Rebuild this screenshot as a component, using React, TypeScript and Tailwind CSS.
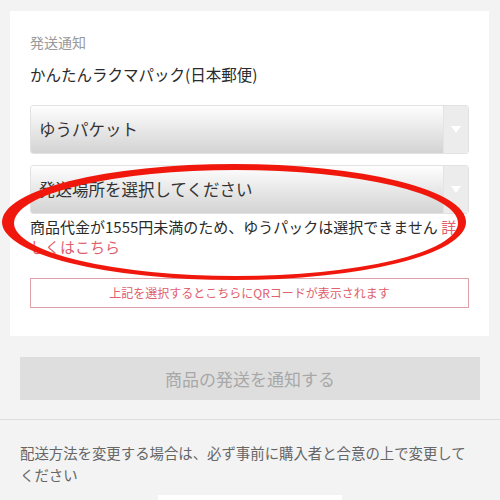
import React from 'react';

const SelectBox: React.FC<{ label: string }> = ({ label }) => (
  <div className="flex h-[49px] rounded-[3px] border border-[#e2e2e2] overflow-hidden">
    <div className="flex-1 flex items-center pl-2 text-[16.5px] text-[#333] bg-gradient-to-b from-[#fefefe] to-[#d3d3d3]">
      {label}
    </div>
    <div className="w-[25px] flex items-center justify-center bg-[#ececec] border-l border-[#e4e4e4]">
      <div className="w-0 h-0 border-l-[5px] border-r-[5px] border-t-[7px] border-l-transparent border-r-transparent border-t-white" />
    </div>
  </div>
);

export default function App() {
  return (
    <div className="relative w-[500px] h-[500px] overflow-hidden bg-[#f3f3f3] font-['Noto_Sans_CJK_JP',sans-serif]">
      <div className="pt-[11px] pl-[10px] pr-[11px]">
        <div className="bg-white px-5 pt-[21px] pb-[28px]">
          <div className="text-[14px] leading-[20px] text-[#9a9a9a]">発送通知</div>
          <div className="mt-[10px] text-[15.5px] leading-[24px] text-[#2a2a2a]">かんたんラクマパック(日本郵便)</div>
          <div className="mt-[19px]">
            <SelectBox label="ゆうパケット" />
          </div>
          <div className="mt-[11px]">
            <SelectBox label="発送場所を選択してください" />
          </div>
          <p className="mt-[3px] text-[15px] leading-[20px] text-[#2a2a2a] pr-2">
            商品代金が1555円未満のため、ゆうパックは選択できません <span className="text-[#e0606e]">詳しくはこちら</span>
          </p>
          <div className="mt-[21px] h-[30px] border border-[#e0a0a8] flex items-center justify-center text-[12px] text-[#e0606e]">
            上記を選択するとこちらにQRコードが表示されます
          </div>
        </div>
      </div>

      <div className="mx-5 mt-[21px] h-[43px] bg-[#dedede] flex items-center justify-center text-[17px] text-[#a8a8a8]">
        商品の発送を通知する
      </div>

      <div className="mt-[19px] border-t border-[#dddddd]" />

      <p className="pl-5 pr-[30px] mt-[22px] text-[14.4px] leading-[22px] text-[#666]">
        配送方法を変更する場合は、必ず事前に購入者と合意の上で変更してください
      </p>

      <div className="mt-[9px] mx-auto w-[184px] h-[30px] bg-white" />

      <svg className="absolute left-0 top-0 pointer-events-none" width="500" height="500" viewBox="0 0 500 500">
        <path
          fillRule="evenodd"
          fill="#f0180c"
          d="M2 222 A232 58 0 1 0 466 222 A232 58 0 1 0 2 222 Z M14 223 A222 53 0 1 0 458 223 A222 53 0 1 0 14 223 Z"
        />
      </svg>
    </div>
  );
}
